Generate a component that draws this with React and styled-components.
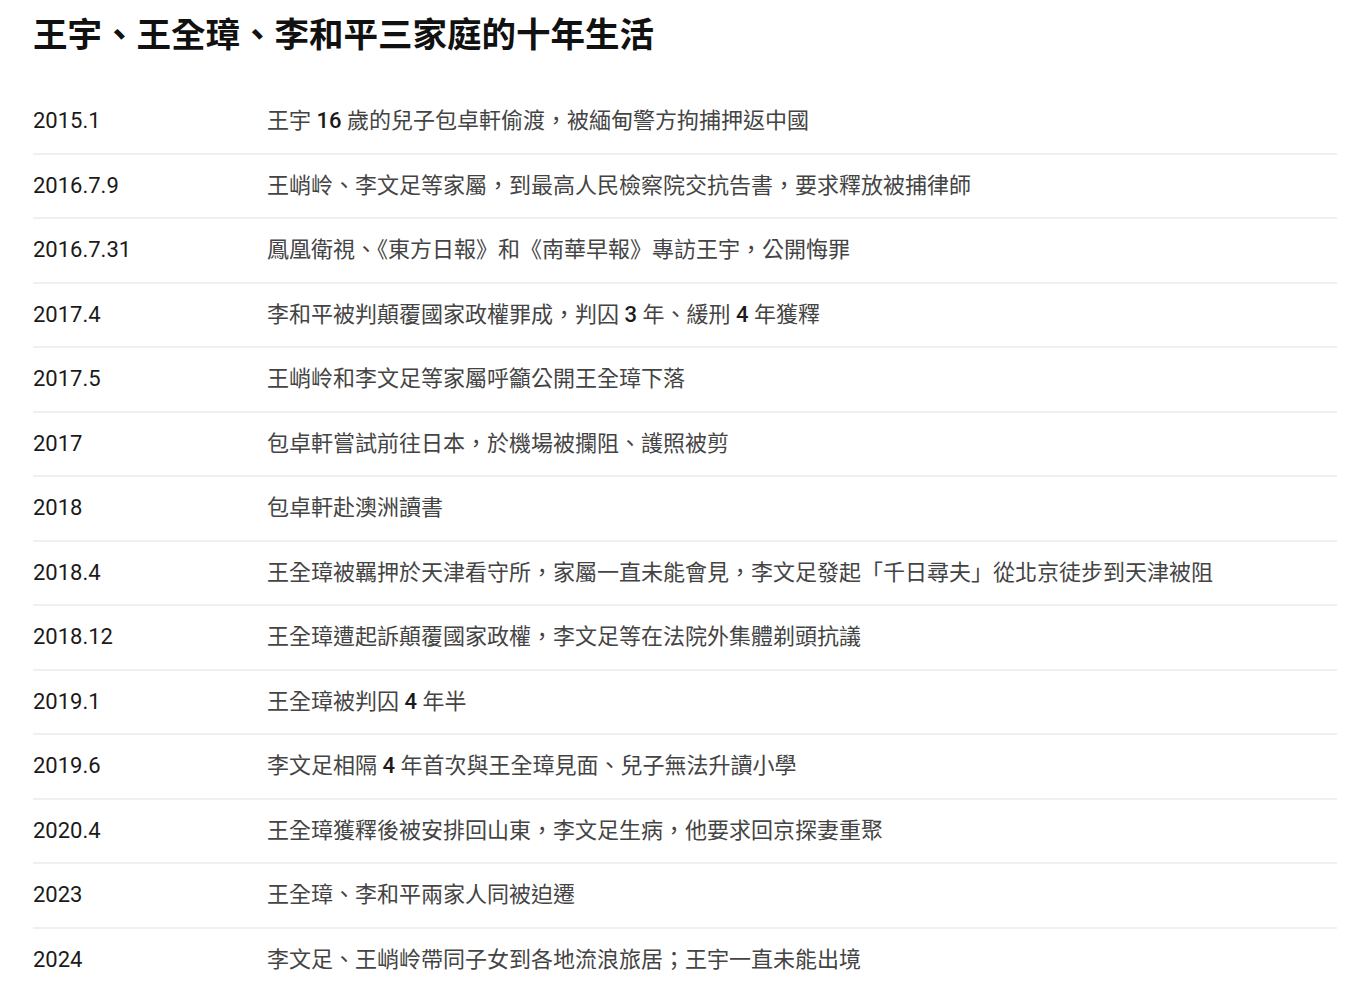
import React from "react";
import styled, { createGlobalStyle } from "styled-components";

const GlobalStyle = createGlobalStyle`
  body {
    margin: 0;
    background: #fff;
    font-family: Roboto, "Noto Sans CJK TC", sans-serif;
  }
`;

const events = [
  ["2015.1", "王宇 16 歲的兒子包卓軒偷渡，被緬甸警方拘捕押返中國"],
  ["2016.7.9", "王峭岭、李文足等家屬，到最高人民檢察院交抗告書，要求釋放被捕律師"],
  ["2016.7.31", "鳳凰衛視、《東方日報》和《南華早報》專訪王宇，公開悔罪"],
  ["2017.4", "李和平被判顛覆國家政權罪成，判囚 3 年、緩刑 4 年獲釋"],
  ["2017.5", "王峭岭和李文足等家屬呼籲公開王全璋下落"],
  ["2017", "包卓軒嘗試前往日本，於機場被攔阻、護照被剪"],
  ["2018", "包卓軒赴澳洲讀書"],
  ["2018.4", "王全璋被羈押於天津看守所，家屬一直未能會見，李文足發起「千日尋夫」從北京徒步到天津被阻"],
  ["2018.12", "王全璋遭起訴顛覆國家政權，李文足等在法院外集體剃頭抗議"],
  ["2019.1", "王全璋被判囚 4 年半"],
  ["2019.6", "李文足相隔 4 年首次與王全璋見面、兒子無法升讀小學"],
  ["2020.4", "王全璋獲釋後被安排回山東，李文足生病，他要求回京探妻重聚"],
  ["2023", "王全璋、李和平兩家人同被迫遷"],
  ["2024", "李文足、王峭岭帶同子女到各地流浪旅居；王宇一直未能出境"],
];

const Page = styled.div`
  padding: 8px 29px 0 33px;
`;

const Title = styled.h1`
  margin: 0 0 34px;
  font-size: 34.5px;
  line-height: 48px;
  font-weight: 700;
  color: #111;
  font-family: "Noto Sans CJK TC", sans-serif;
`;

const Timeline = styled.div`
  display: flex;
  flex-direction: column;
`;

const Row = styled.div`
  display: grid;
  grid-template-columns: 234px 1fr;
  align-items: baseline;
  padding: 16px 0;
  height: 30.5px;
  box-sizing: content-box;
  border-bottom: ${(p) => (p.$last ? "none" : "2px solid #f0f0f0")};
`;

const Year = styled.div`
  font-size: 22px;
  line-height: 30px;
  color: #1a1a1a;
  font-family: Roboto, sans-serif;
`;

const Text = styled.div`
  font-size: 22px;
  line-height: 30px;
  color: #444;
  font-family: Roboto, "Noto Sans CJK TC", sans-serif;
  white-space: nowrap;
`;

const Num = styled.span`
  font-weight: 500;
  color: #1a1a1a;
`;

function withNumbers(text) {
  return text.split(/(\d+)/).map((part, i) =>
    /^\d+$/.test(part) ? <Num key={i}>{part}</Num> : part
  );
}

export default function App() {
  return (
    <Page>
      <GlobalStyle />
      <Title>王宇、王全璋、李和平三家庭的十年生活</Title>
      <Timeline>
        {events.map(([y, t], i) => (
          <Row key={y} $last={i === events.length - 1}>
            <Year>{y}</Year>
            <Text>{withNumbers(t)}</Text>
          </Row>
        ))}
      </Timeline>
    </Page>
  );
}
